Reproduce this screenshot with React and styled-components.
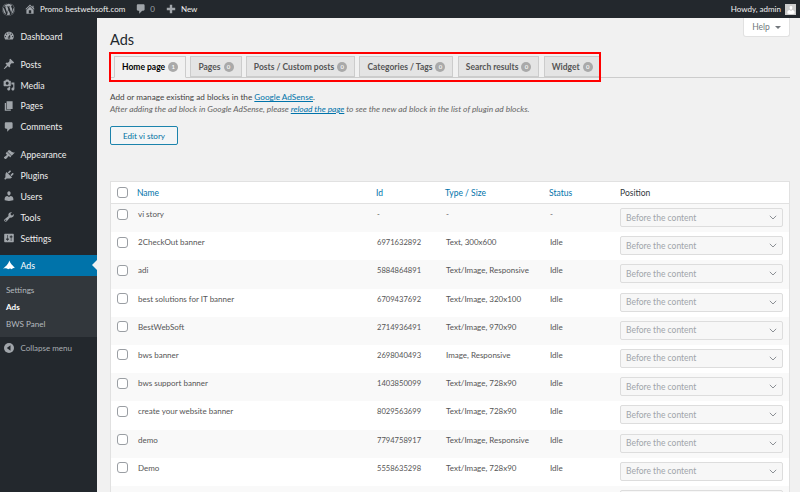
import React from "react"
import styled, { createGlobalStyle } from "styled-components"
import { FaWordpress } from "react-icons/fa"

const GlobalStyle = createGlobalStyle`
  html, body {
    margin: 0;
    height: 492px;
    overflow: hidden;
    background: #f1f1f1;
    font-family: Lato, "Open Sans", sans-serif;
    color: #444;
  }
  * { box-sizing: border-box; }
`

const Page = styled.div`
  width: 800px;
  height: 492px;
  display: flex;
  flex-direction: column;
  overflow: hidden;
`

const TopBar = styled.header`
  height: 18px;
  flex: none;
  background: #23282d;
  color: #eee;
  display: flex;
  align-items: center;
  font-size: 8px;
  padding: 0 4px 0 2px;
`

const BarItem = styled.span`
  display: flex;
  align-items: center;
  gap: ${p => p.$gap || 5}px;
  margin-right: ${p => p.$right || 10}px;
  color: ${p => p.$dim ? "#9ea3a8" : "#eee"};
  svg { color: #a0a5aa; flex: none; }
`

const Howdy = styled.span`
  margin-left: auto;
  display: flex;
  align-items: center;
  gap: 4px;
`

const Avatar = styled.span`
  width: 11px;
  height: 11px;
  background: #ccc;
  display: flex;
  align-items: flex-end;
  justify-content: center;
  overflow: hidden;
`

const Body = styled.div`
  flex: 1;
  display: flex;
  min-height: 0;
`

const Sidebar = styled.nav`
  width: 97px;
  flex: none;
  background: #23282d;
  padding-top: 8px;
  font-size: 8.8px;
`

const MenuItem = styled.div`
  height: 20.85px;
  display: flex;
  align-items: center;
  gap: 5.5px;
  padding-left: 3px;
  margin-top: ${p => p.$gap || 0}px;
  color: ${p => p.$active ? "#fff" : "#eee"};
  background: ${p => p.$active ? "#0073aa" : "transparent"};
  position: relative;
  svg { flex: none; }
`

const Notch = styled.span`
  position: absolute;
  right: 0;
  top: 5px;
  border: 5px solid transparent;
  border-left-width: 0;
  border-right-color: #f1f1f1;
`

const SubMenu = styled.div`
  background: #32373c;
  padding: 5px 0 5px 6px;
  font-size: 8.1px;
`

const SubItem = styled.div`
  height: 17px;
  display: flex;
  align-items: center;
  font-weight: ${p => p.$current ? 700 : 400};
  color: ${p => p.$current ? "#fff" : "#b4b9be"};
`

const Collapse = styled(MenuItem)`
  color: #a9aeb3;
  font-size: 8px;
`

const Main = styled.main`
  flex: 1;
  min-width: 0;
  padding: 0 10px 0 13px;
  position: relative;
`

const HelpTab = styled.div`
  position: absolute;
  top: 0;
  right: 10px;
  width: 47px;
  height: 19px;
  background: #fff;
  border: 1px solid #e1e1e1;
  border-top: 0;
  border-radius: 0 0 3px 3px;
  font-size: 8.5px;
  color: #72777c;
  display: flex;
  align-items: center;
  justify-content: center;
  gap: 5px;
`

const Caret = styled.span`
  border: 3px solid transparent;
  border-top: 3.5px solid #72777c;
  border-bottom: 0;
`

const Title = styled.h1`
  margin: 0;
  padding-top: 13px;
  font-size: 14.5px;
  line-height: 18px;
  font-weight: 400;
  color: #23282d;
`

const Tabs = styled.div`
  margin-top: 7px;
  height: 22px;
  display: flex;
  align-items: flex-end;
  gap: 4.3px;
  padding-left: 4px;
  border-bottom: 1px solid #ccc;
  position: relative;
`

const Tab = styled.div`
  height: ${p => p.$active ? 22 : 21}px;
  margin-bottom: ${p => p.$active ? -1 : 0}px;
  padding: 0 7px;
  display: flex;
  align-items: center;
  gap: 3px;
  font-size: 8.5px;
  font-weight: 700;
  white-space: nowrap;
  color: ${p => p.$active ? "#000" : "#555"};
  background: ${p => p.$active ? "#f1f1f1" : "#e4e4e4"};
  border: 1px solid #ccc;
  border-bottom: ${p => p.$active ? "1px solid #f1f1f1" : "1px solid #ccc"};
`

const Count = styled.span`
  width: 10px;
  height: 10px;
  border-radius: 50%;
  background: #a9a9a9;
  color: #fff;
  font-size: 6px;
  line-height: 10px;
  text-align: center;
  font-weight: 600;
`

const RedFrame = styled.div`
  position: absolute;
  left: -1px;
  top: -4px;
  width: 492px;
  height: 30px;
  border: 2px solid #f00;
  pointer-events: none;
`

const Intro = styled.p`
  margin: 13px 0 0;
  font-size: 8.2px;
  line-height: 12px;
  color: #444;
`

const Note = styled.p`
  margin: 0;
  font-size: 8.4px;
  line-height: 12px;
  font-style: italic;
  color: #666;
`

const Link = styled.a`
  color: #0073aa;
  text-decoration: underline;
`

const EditButton = styled.button`
  display: block;
  margin-top: 11px;
  width: 68px;
  height: 19px;
  padding: 0;
  background: #f3f5f6;
  border: 1px solid #1b83ac;
  border-radius: 2px;
  font: 8.1px Lato, "Open Sans", sans-serif;
  color: #0071a1;
`

const Table = styled.div`
  margin-top: 36px;
  background: #fff;
  border: 1px solid #e1e1e1;
`

const Row = styled.div`
  display: grid;
  grid-template-columns: 26px 239px 69px 104px 71px 163px;
  height: 28.2px;
  padding-top: 4px;
  font-size: 8px;
  color: #555;
  background: ${p => p.$odd ? "#f9f9f9" : "#fff"};
`

const HeadRow = styled(Row)`
  height: 22px;
  padding-top: 0;
  align-items: center;
  font-size: 8.5px;
  background: #fff;
  border-bottom: 1px solid #e1e1e1;
`

const HeadCell = styled.span`
  color: ${p => p.$plain ? "#32373c" : "#0073aa"};
`

const CheckCell = styled.span`
  display: flex;
  padding: ${p => p.$head ? 0 : 0.5}px 0 0 6px;
`

const Check = styled.span`
  width: 11px;
  height: 11px;
  background: #fff;
  border: 1px solid #9a9ea3;
  border-radius: 3px;
`

const Cell = styled.span`
  padding: 1px 0 0 1px;
  line-height: 11px;
  white-space: nowrap;
`

const IdCell = styled(Cell)`
  font-size: 7.6px;
`

const Select = styled.span`
  height: 19px;
  background: #f7f7f7;
  border: 1px solid #ddd;
  border-radius: 2px;
  color: #a0a5aa;
  padding: 0 5px;
  font-size: 8.5px;
  display: flex;
  align-items: center;
  justify-content: space-between;
`

const Dashicon = ({ d, size = 12, color = "#a0a5aa" }) => (
  <svg width={size} height={size} viewBox="0 0 20 20" fill={color}>
    <path d={d} />
  </svg>
)

const AdsIcon = () => (
  <svg width="12" height="11" viewBox="0 0 13 11" fill="#fff">
    <path d="M7 0 C7.5 2 9 4 10.5 5.5 C11.5 6.5 12.5 7.5 13 8.5 C11.5 8 10.5 8.5 9.5 9.5 C8.5 8.5 7 8.5 5.5 9.5 C4.5 8.5 3 8 0 9 C2 7 4 6 5 4 C6 2.5 6.5 1 7 0 Z" />
  </svg>
)

const CollapseIcon = () => (
  <svg width="12" height="12" viewBox="0 0 12 12">
    <circle cx="6" cy="6" r="5" fill="#a0a5aa" />
    <path d="M7.5 3.2 L3.8 6 L7.5 8.8 Z" fill="#23282d" />
  </svg>
)

const Chevron = () => (
  <svg width="8" height="5" viewBox="0 0 8 5" fill="none" stroke="#8c9095" strokeWidth="1">
    <path d="M.8 .8 L4 4 L7.2 .8" />
  </svg>
)

const icons = {
  home: "M16 8.5l1.53 1.53-1.06 1.06L10 4.62l-6.47 6.47-1.06-1.06L10 2.5l4 4v-2h2v4zm-6-2.46l6 5.99V18H4v-5.97zM12 17v-5H8v5h4z",
  plus: "M8 3h4v5h5v4h-5v5H8v-5H3V8h5z",
  dashboard: "M3.76 16h12.48c1.1-1.37 1.76-3.11 1.76-5 0-4.42-3.58-8-8-8s-8 3.58-8 8c0 1.89.66 3.63 1.76 5zM10 4c.55 0 1 .45 1 1s-.45 1-1 1-1-.45-1-1 .45-1 1-1zM6 6c.55 0 1 .45 1 1s-.45 1-1 1-1-.45-1-1 .45-1 1-1zm8 0c.55 0 1 .45 1 1s-.45 1-1 1-1-.45-1-1 .45-1 1-1zm-5.37 5.55L12 7v6c0 1.1-.9 2-2 2s-2-.9-2-2c0-.57.24-1.08.63-1.45zM4 10c.55 0 1 .45 1 1s-.45 1-1 1-1-.45-1-1 .45-1 1-1zm12 0c.55 0 1 .45 1 1s-.45 1-1 1-1-.45-1-1 .45-1 1-1zm-5 3c0-.55-.45-1-1-1s-1 .45-1 1 .45 1 1 1 1-.45 1-1z",
  post: "M10.44 3.02l1.82-1.82 6.36 6.35-1.83 1.82c-1.05-.68-2.48-.57-3.41.36l-.75.75c-.92.93-1.04 2.35-.35 3.41l-1.83 1.82-2.41-2.41-2.8 2.79c-.42.42-3.38 2.71-3.8 2.29s1.86-3.39 2.28-3.81l2.79-2.79L4.1 9.36l1.83-1.82c1.05.69 2.48.57 3.4-.36l.75-.75c.93-.92 1.05-2.35.36-3.41z",
  media: "M13 11V4c0-.55-.45-1-1-1h-1.67L9 1H5L3.67 3H2c-.55 0-1 .45-1 1v7c0 .55.45 1 1 1h10c.55 0 1-.45 1-1zM7 4.5c1.38 0 2.5 1.12 2.5 2.5S8.38 9.5 7 9.5 4.5 8.38 4.5 7 5.62 4.5 7 4.5zM14 6h5v10.5c0 1.38-1.12 2.5-2.5 2.5S14 17.88 14 16.5s1.12-2.5 2.5-2.5c.17 0 .34.02.5.05V9h-3V6zm-4 8.05V13h2v3.5c0 1.38-1.12 2.5-2.5 2.5S7 17.88 7 16.5 8.12 14 9.5 14c.17 0 .34.02.5.05z",
  page: "M6 15V2h10v13H6zm-1 1h8v2H3V5h2v11z",
  comment: "M5 2h9c1.1 0 2 .9 2 2v7c0 1.1-.9 2-2 2h-2l-5 5v-5H5c-1.1 0-2-.9-2-2V4c0-1.1.9-2 2-2z",
  appearance: "M14.48 11.06L7.41 3.99l1.5-1.5c.5-.56 2.3-.47 3.51.32 1.21.8 1.43 1.28 2.91 2.1 1.18.64 2.45 1.26 4.45.85zm-.71.71L6.7 4.7 4.93 6.47c-.39.39-.39 1.02 0 1.41l1.06 1.06c.39.39.39 1.03 0 1.42-.6.6-1.43 1.11-2.21 1.69-.35.26-.7.53-1.01.84C1.43 13.23.99 14.26 2.5 15.77c1.51 1.5 2.53 1.07 3.89-.29.31-.31.58-.66.84-1.01.57-.78 1.08-1.61 1.69-2.21.39-.39 1.02-.39 1.41 0l1.06 1.06c.39.39 1.02.39 1.41 0z",
  plugins: "M13.11 4.36L9.87 7.6 8 5.73l3.24-3.24c.35-.34 1.05-.2 1.56.32.52.51.66 1.21.31 1.55zm-8 1.77l.91-1.12 9.01 9.01-1.19.84c-.71.71-2.63 1.16-3.82 1.16H6.14L4.9 17.26c-.59.59-1.54.59-2.12 0-.59-.58-.59-1.53 0-2.12l1.24-1.24v-3.88c0-1.13.4-3.19 1.09-3.89zm7.26 3.97l3.24-3.24c.34-.35 1.04-.21 1.55.31.52.51.66 1.21.31 1.55l-3.24 3.25z",
  users: "M10 9.25c-2.27 0-2.73-3.44-2.73-3.44C7 4.02 7.82 2 9.97 2c2.16 0 2.98 2.02 2.71 3.81 0 0-.41 3.44-2.68 3.44zm0 2.57L12.72 10c2.39 0 4.52 2.33 4.52 4.53v2.49s-3.65 1.13-7.24 1.13c-3.65 0-7.24-1.13-7.24-1.13v-2.49c0-2.25 1.94-4.48 4.47-4.48z",
  tools: "M16.68 9.77c-1.34 1.34-3.3 1.67-4.95.99l-5.41 6.52c-.99.99-2.59.99-3.58 0s-.99-2.59 0-3.57l6.52-5.42c-.68-1.65-.35-3.61.99-4.95 1.28-1.28 3.12-1.62 4.72-1.06l-2.89 2.89 2.82 2.82 2.86-2.87c.53 1.58.18 3.39-1.08 4.65zM3.81 16.21c.4.39 1.04.39 1.43 0 .4-.4.4-1.04 0-1.43-.39-.4-1.03-.4-1.43 0-.39.39-.39 1.03 0 1.43z",
  settings: "M18 16V4c0-.55-.45-1-1-1H3c-.55 0-1 .45-1 1v12c0 .55.45 1 1 1h14c.55 0 1-.45 1-1zM8 11h1c.55 0 1 .45 1 1s-.45 1-1 1H8v1.5c0 .28-.22.5-.5.5s-.5-.22-.5-.5V13H6c-.55 0-1-.45-1-1s.45-1 1-1h1V5.5c0-.28.22-.5.5-.5s.5.22.5.5V11zm5-2h-1c-.55 0-1-.45-1-1s.45-1 1-1h1V5.5c0-.28.22-.5.5-.5s.5.22.5.5V7h1c.55 0 1 .45 1 1s-.45 1-1 1h-1v5.5c0 .28-.22.5-.5.5s-.5-.22-.5-.5V9z",
}

const menu = [
  { label: "Dashboard", icon: "dashboard" },
  { label: "Posts", icon: "post", gap: 7 },
  { label: "Media", icon: "media" },
  { label: "Pages", icon: "page" },
  { label: "Comments", icon: "comment" },
  { label: "Appearance", icon: "appearance", gap: 7 },
  { label: "Plugins", icon: "plugins" },
  { label: "Users", icon: "users" },
  { label: "Tools", icon: "tools" },
  { label: "Settings", icon: "settings" },
]

const tabs = [
  { label: "Home page", count: 1, active: true },
  { label: "Pages", count: 0 },
  { label: "Posts / Custom posts", count: 0 },
  { label: "Categories / Tags", count: 0 },
  { label: "Search results", count: 0 },
  { label: "Widget", count: 0 },
]

const rows = [
  ["vi story", "-", "-", "-"],
  ["2CheckOut banner", "6971632892", "Text, 300x600", "Idle"],
  ["adi", "5884864891", "Text/Image, Responsive", "Idle"],
  ["best solutions for IT banner", "6709437692", "Text/Image, 320x100", "Idle"],
  ["BestWebSoft", "2714936491", "Text/Image, 970x90", "Idle"],
  ["bws banner", "2698040493", "Image, Responsive", "Idle"],
  ["bws support banner", "1403850099", "Text/Image, 728x90", "Idle"],
  ["create your website banner", "8029563699", "Text/Image, 728x90", "Idle"],
  ["demo", "7794758917", "Text/Image, Responsive", "Idle"],
  ["Demo", "5558635298", "Text/Image, 728x90", "Idle"],
]

export default function App() {
  return (
    <Page>
      <GlobalStyle />
      <TopBar>
        <BarItem $gap={0} $right={9}><FaWordpress size={13} /></BarItem>
        <BarItem $gap={4}><Dashicon d={icons.home} /> Promo bestwebsoft.com</BarItem>
        <BarItem $gap={3} $dim><Dashicon d={icons.comment} /> 0</BarItem>
        <BarItem $gap={4}><Dashicon d={icons.plus} /> New</BarItem>
        <Howdy>
          Howdy, admin
          <Avatar><Dashicon d={icons.users} size={10} color="#fff" /></Avatar>
        </Howdy>
      </TopBar>
      <Body>
        <Sidebar>
          {menu.map(({ label, icon, gap }) => (
            <MenuItem key={label} $gap={gap}>
              <Dashicon d={icons[icon]} />
              {label}
            </MenuItem>
          ))}
          <MenuItem $active $gap={7}>
            <AdsIcon />
            Ads
            <Notch />
          </MenuItem>
          <SubMenu>
            <SubItem>Settings</SubItem>
            <SubItem $current>Ads</SubItem>
            <SubItem>BWS Panel</SubItem>
          </SubMenu>
          <Collapse>
            <CollapseIcon />
            Collapse menu
          </Collapse>
        </Sidebar>
        <Main>
          <HelpTab>Help <Caret /></HelpTab>
          <Title>Ads</Title>
          <Tabs>
            {tabs.map(t => (
              <Tab key={t.label} $active={t.active}>
                {t.label} <Count>{t.count}</Count>
              </Tab>
            ))}
            <RedFrame />
          </Tabs>
          <Intro>Add or manage existing ad blocks in the <Link>Google AdSense</Link>.</Intro>
          <Note>
            After adding the ad block in Google AdSense, please <Link>reload the page</Link> to see the new ad block in the list of plugin ad blocks.
          </Note>
          <EditButton>Edit vi story</EditButton>
          <Table>
            <HeadRow>
              <CheckCell $head><Check /></CheckCell>
              <HeadCell>Name</HeadCell>
              <HeadCell>Id</HeadCell>
              <HeadCell>Type / Size</HeadCell>
              <HeadCell>Status</HeadCell>
              <HeadCell $plain>Position</HeadCell>
            </HeadRow>
            {rows.map((r, i) => (
              <Row key={i} $odd={i % 2 === 0}>
                <CheckCell><Check /></CheckCell>
                <Cell>{r[0]}</Cell>
                <IdCell>{r[1]}</IdCell>
                <Cell>{r[2]}</Cell>
                <Cell>{r[3]}</Cell>
                <Select>Before the content <Chevron /></Select>
              </Row>
            ))}
            <Row $odd>
              <span />
              <span />
              <span />
              <span />
              <span />
              <Select />
            </Row>
          </Table>
        </Main>
      </Body>
    </Page>
  )
}
